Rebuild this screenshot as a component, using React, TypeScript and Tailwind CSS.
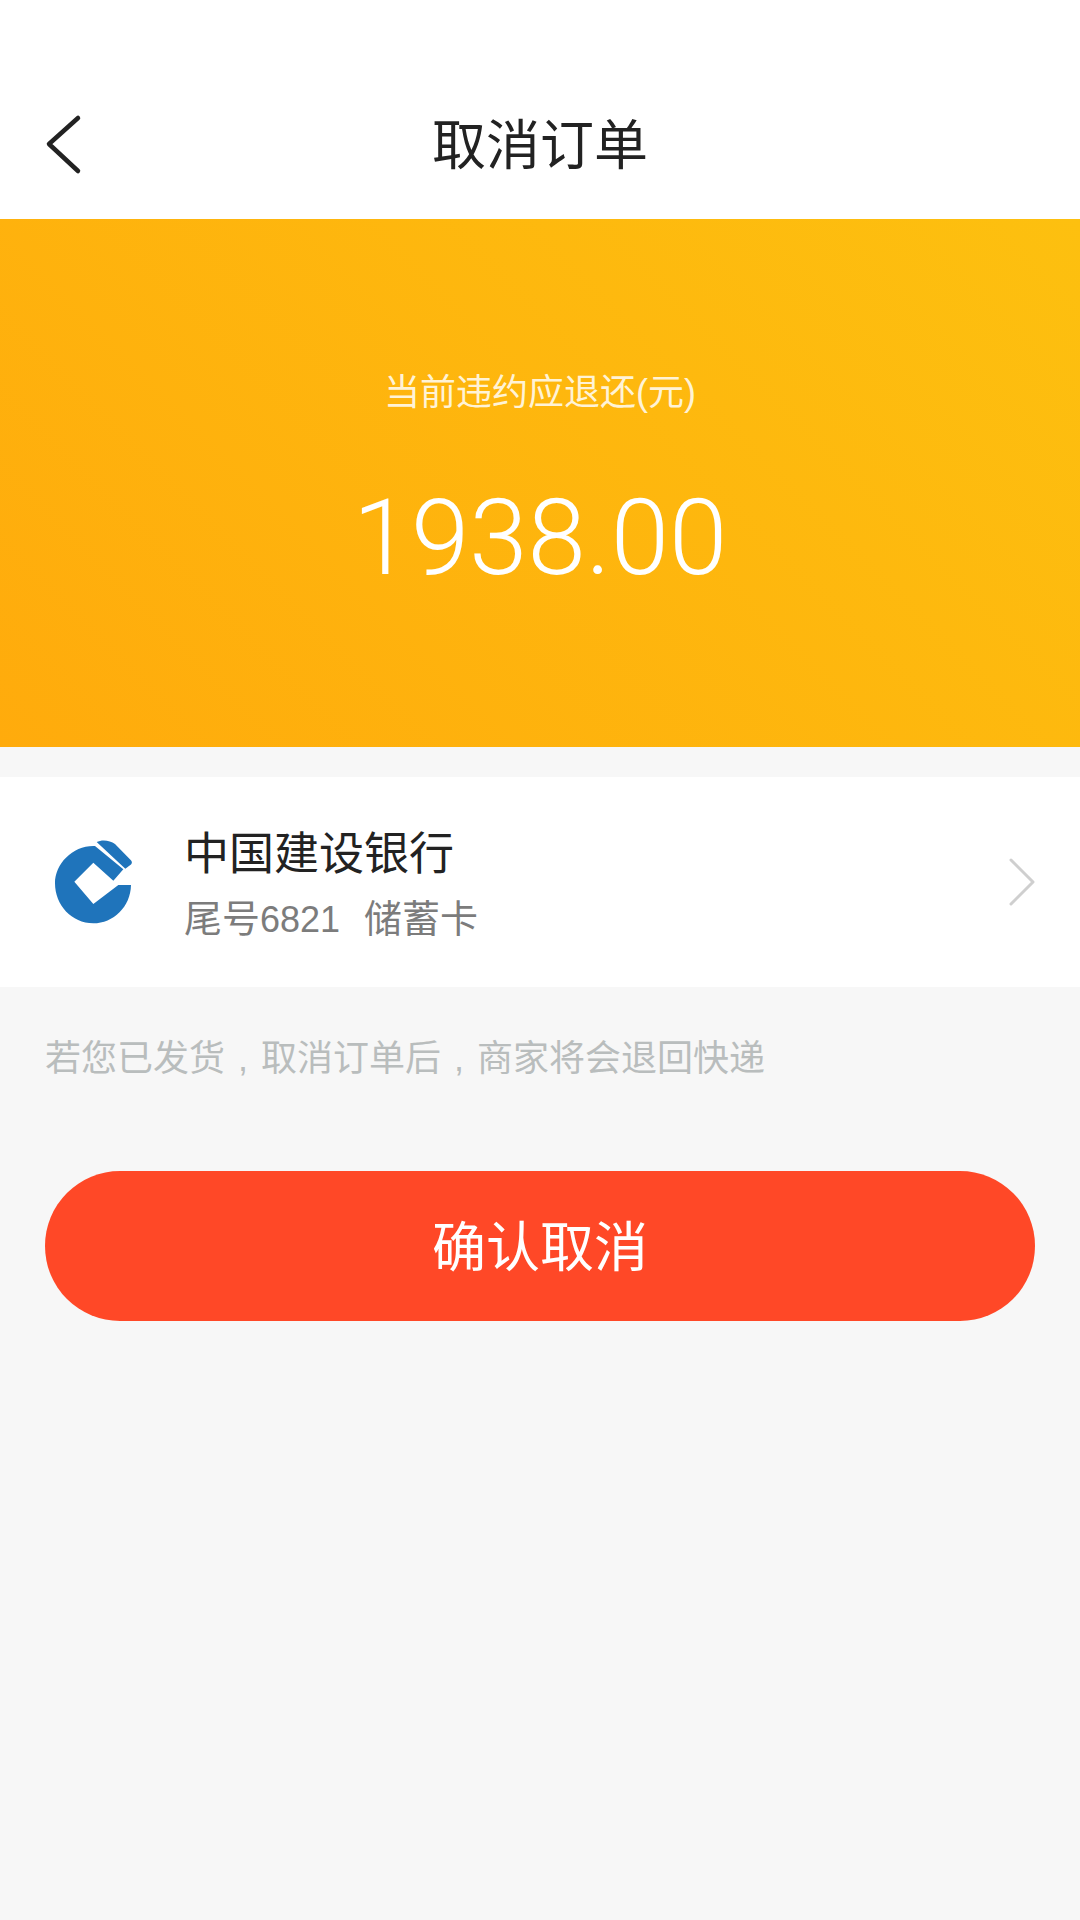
import React from 'react';

const cjk = "font-['Liberation_Sans','Noto_Sans_CJK_SC',sans-serif]";

const BankLogo = () => (
  <svg width="110" height="110" viewBox="0 0 330 330" className="shrink-0 mt-[6px]">
    <path
      d="M165 48 L250 118 L220 152 L160 98 L103 155 L160 222 L235 165 L273 165 C272 230 220 280 160 280 C95 280 45 225 45 160 C45 100 100 45 165 48 Z"
      fill="#1f74bb"
    />
    <path
      d="M170 36 C185 28 210 30 225 42 L272 90 C278 96 276 102 270 106 L256 116 Z"
      fill="#1f74bb"
    />
  </svg>
);

const App = () => {
  return (
    <div className={`flex flex-col w-[1080px] h-[1920px] bg-[#f7f7f7] ${cjk}`}>
      <div className="flex items-center justify-center relative h-[219px] pt-[73px] bg-white">
        <svg width="40" height="64" viewBox="0 0 40 64" className="absolute left-[43px] top-[113px]">
          <path d="M35 5 L6 31 L35 58" fill="none" stroke="#222" strokeWidth="4.5" strokeLinecap="round" strokeLinejoin="round" />
        </svg>
        <span className="text-[54px] leading-none text-[#222]">取消订单</span>
      </div>

      <div className="flex flex-col items-center h-[528px] pt-[152px] bg-linear-45 from-[#ffab0c] to-[#fdc00f] text-white">
        <span className="text-[36px] leading-[44px] text-[#fff3d6]">当前违约应退还(元)</span>
        <span className="mt-[64px] text-[105px] leading-[120px] font-light font-['Roboto',sans-serif]">1938.00</span>
      </div>

      <div className="flex items-center h-[210px] mt-[30px] pl-[40px] pr-[42px] bg-white">
        <BankLogo />
        <div className="flex flex-col ml-[34px] pt-[7px] flex-1">
          <span className="text-[45px] leading-[60px] text-[#222]">中国建设银行</span>
          <span className="mt-[8px] text-[38px] leading-[52px] text-[#7c7c7c]">
            尾号<span className="text-[36px]">6821</span>
            <span className="ml-[24px]">储蓄卡</span>
          </span>
        </div>
        <svg width="30" height="50" viewBox="0 0 30 50">
          <path d="M3 3 L25 25 L3 47" fill="none" stroke="#cfcfcf" strokeWidth="3" strokeLinecap="round" strokeLinejoin="round" />
        </svg>
      </div>

      <p className="mt-[50px] px-[45px] text-[36px] leading-[44px] text-[#b9bdbd]">
        若您已发货<span className="inline-block w-[36px] text-center">,</span>取消订单后<span className="inline-block w-[36px] text-center">,</span>商家将会退回快递
      </p>

      <button className="flex items-center justify-center mt-[90px] mx-[45px] h-[150px] pt-[4px] rounded-[75px] bg-[#ff4827] text-white text-[54px]">
        确认取消
      </button>
    </div>
  );
};

export default App;
